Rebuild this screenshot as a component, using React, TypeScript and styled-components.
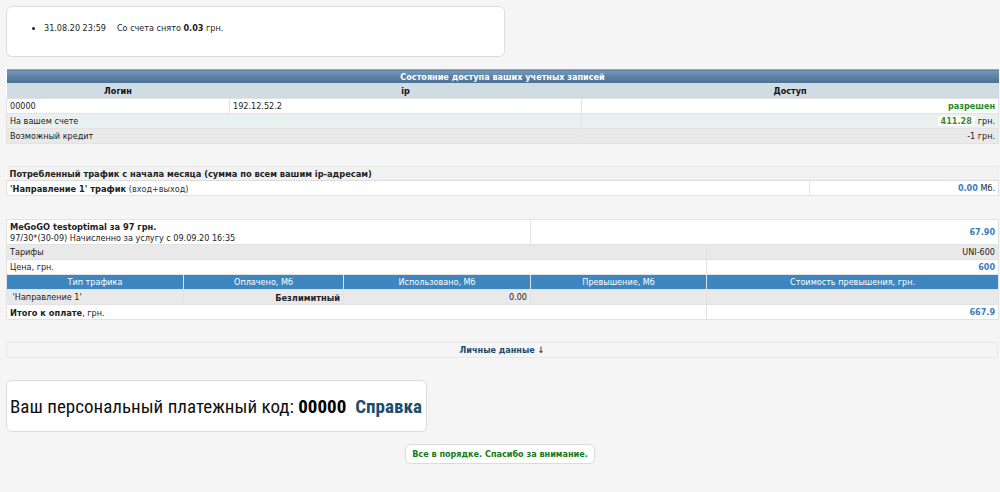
import React from 'react';
import styled, {createGlobalStyle} from 'styled-components';

const GlobalStyle = createGlobalStyle`
  html, body {
    margin: 0;
    padding: 0;
    background: #f5f5f5;
  }
  body {
    padding: 6px;
    font-family: "DejaVu Sans Condensed", "DejaVu Sans", sans-serif;
    font-size: 9px;
    color: #222;
  }
`;

const Box = styled.div`
  background: #fff;
  border: 1px solid #dcdcdc;
  border-radius: 6px;
`;

const NewsBox = styled(Box)`
  width: 497px;
  height: 49px;
  box-sizing: content-box;
  display: flex;
  align-items: center;
`;

const NewsList = styled.ul`
  margin: 0 0 8px;
  padding-left: 37px;
  list-style: disc;
  li {
    color: #222;
  }
`;

const Gap = styled.span`
  display: inline-block;
  width: 11px;
`;

const Table = styled.table<{ $mt: number }>`
  width: 992px;
  margin-top: ${p => p.$mt}px;
  border-collapse: collapse;
  table-layout: fixed;
  background: #fff;
  b {
    font-size: 9.2px;
  }
`;

const Caption = styled.th`
  height: 13px;
  padding: 0;
  color: #fff;
  font-weight: bold;
  text-align: center;
  background: linear-gradient(180deg, #7799b8 0%, #5b80a3 50%, #4b7193 100%);
  border-top: 1px solid #8aa8c2;
`;

const HeadCell = styled.th`
  height: 15px;
  padding: 0 2px;
  background: #d0dce4;
  font-weight: bold;
  text-align: center;
  color: #111;
`;

const Cell = styled.td<{ $bg?: string; $align?: string }>`
  height: 14px;
  padding: 0 3px;
  background: ${p => p.$bg || '#fff'};
  text-align: ${p => p.$align || 'left'};
  border: 1px solid #e2e2e2;
  white-space: nowrap;
  overflow: hidden;
`;

const TallCell = styled(Cell)`
  height: 24px;
  line-height: 11px;
`;

const BlueHead = styled.td`
  height: 14px;
  padding: 0 3px;
  background: #3c86c2;
  color: #fff;
  text-align: center;
  border: 1px solid #e2e2e2;
`;

const Green = styled.span`
  color: #1e8a1e;
  font-weight: bold;
`;

const Chip = styled.span`
  background: #fff;
  padding: 0 3px;
  color: #3a8d2b;
  font-weight: bold;
  margin-right: 3px;
`;

const Blue = styled.span`
  color: #3a7dbf;
  font-weight: bold;
`;

const SectionTitle = styled.td`
  height: 13px;
  padding: 0 3px;
  background: #f1f1f1;
  font-weight: bold;
  font-size: 9.2px;
  border-top: 1px solid #e8e8e8;
  border-bottom: 1px solid #dcdcdc;
`;

const Muted = styled.span`
  color: #333;
`;

const PersonalBar = styled.div`
  width: 990px;
  height: 14px;
  margin-top: 22px;
  background: #f5f5f5;
  border: 1px solid #e8e8e8;
  display: flex;
  justify-content: center;
  align-items: center;
  font-weight: bold;
  color: #1c4a6c;
`;

const CodeBox = styled(Box)`
  width: 416px;
  height: 50px;
  box-sizing: content-box;
  margin-top: 22px;
  display: flex;
  align-items: center;
  padding-left: 3px;
  font-family: "Liberation Sans Narrow", "Roboto Condensed", Roboto, sans-serif;
  font-size: 19px;
  color: #111;
  white-space: nowrap;
  b {
    color: #000;
  }
`;

const HelpLink = styled.a`
  margin-left: 9px;
  color: #1a4d6e;
  font-weight: bold;
  text-decoration: none;
`;

const Footer = styled.div`
  display: flex;
  justify-content: center;
  margin-top: 12px;
`;

const OkBox = styled(Box)`
  padding: 4px 6px;
  color: #157a15;
  font-weight: bold;
`;

export default function App() {
    return (
        <>
            <GlobalStyle/>
            <NewsBox>
                <NewsList>
                    <li>31.08.20 23:59<Gap/>Со счета снято <b>0.03</b> грн.</li>
                </NewsList>
            </NewsBox>

            <Table $mt={12}>
                <colgroup>
                    <col style={{width: 223}}/>
                    <col style={{width: 352}}/>
                    <col style={{width: 417}}/>
                </colgroup>
                <thead>
                <tr><Caption colSpan={3}>Состояние доступа ваших учетных записей</Caption></tr>
                <tr>
                    <HeadCell>Логин</HeadCell>
                    <HeadCell>ip</HeadCell>
                    <HeadCell>Доступ</HeadCell>
                </tr>
                </thead>
                <tbody>
                <tr>
                    <Cell>00000</Cell>
                    <Cell>192.12.52.2</Cell>
                    <Cell $align="right"><Green>разрешен</Green></Cell>
                </tr>
                <tr>
                    <Cell colSpan={2} $bg="#e8f0f0">На вашем счете</Cell>
                    <Cell $bg="#e8f0f0" $align="right"><Chip>411.28</Chip>грн.</Cell>
                </tr>
                <tr>
                    <Cell colSpan={2} $bg="#e9e9e9">Возможный кредит</Cell>
                    <Cell $bg="#e9e9e9" $align="right">-1 грн.</Cell>
                </tr>
                </tbody>
            </Table>

            <Table $mt={22}>
                <colgroup>
                    <col style={{width: 803}}/>
                    <col style={{width: 189}}/>
                </colgroup>
                <tbody>
                <tr><SectionTitle colSpan={2}>Потребленный трафик с начала месяца (сумма по всем вашим ip-адресам)</SectionTitle></tr>
                <tr>
                    <Cell><b>'Направление 1' трафик</b> <Muted>(вход+выход)</Muted></Cell>
                    <Cell $align="right"><Blue>0.00</Blue> Мб.</Cell>
                </tr>
                </tbody>
            </Table>

            <Table $mt={23}>
                <colgroup>
                    <col style={{width: 177}}/>
                    <col style={{width: 160}}/>
                    <col style={{width: 187}}/>
                    <col style={{width: 176}}/>
                    <col style={{width: 292}}/>
                </colgroup>
                <tbody>
                <tr>
                    <TallCell colSpan={3}><b>MeGoGO testoptimal за 97 грн.</b><br/>97/30*(30-09) Начисленно за услугу с 09.09.20 16:35</TallCell>
                    <TallCell colSpan={2} $align="right"><Blue>67.90</Blue></TallCell>
                </tr>
                <tr>
                    <Cell colSpan={4} $bg="#e9e9e9">Тарифы</Cell>
                    <Cell $bg="#e9e9e9" $align="right">UNI-600</Cell>
                </tr>
                <tr>
                    <Cell colSpan={4}>Цена, грн.</Cell>
                    <Cell $align="right"><Blue>600</Blue></Cell>
                </tr>
                <tr>
                    <BlueHead>Тип трафика</BlueHead>
                    <BlueHead>Оплачено, Мб</BlueHead>
                    <BlueHead>Использовано, Мб</BlueHead>
                    <BlueHead>Превышение, Мб</BlueHead>
                    <BlueHead>Стоимость превышения, грн.</BlueHead>
                </tr>
                <tr>
                    <Cell $bg="#e9e9e9">&nbsp;'Направление 1'</Cell>
                    <Cell $bg="#e9e9e9" $align="right"><b>Безлимитный</b></Cell>
                    <Cell $bg="#e9e9e9" $align="right">0.00</Cell>
                    <Cell $bg="#e9e9e9"/>
                    <Cell $bg="#e9e9e9"/>
                </tr>
                <tr>
                    <Cell colSpan={4}><b>Итого к оплате</b>, грн.</Cell>
                    <Cell $align="right"><Blue>667.9</Blue></Cell>
                </tr>
                </tbody>
            </Table>

            <PersonalBar>Личные данные ↓</PersonalBar>

            <CodeBox>
                <span>Ваш персональный платежный код: <b>00000</b></span>
                <HelpLink href="#">Справка</HelpLink>
            </CodeBox>

            <Footer>
                <OkBox>Все в порядке. Спасибо за внимание.</OkBox>
            </Footer>
        </>
    );
}
